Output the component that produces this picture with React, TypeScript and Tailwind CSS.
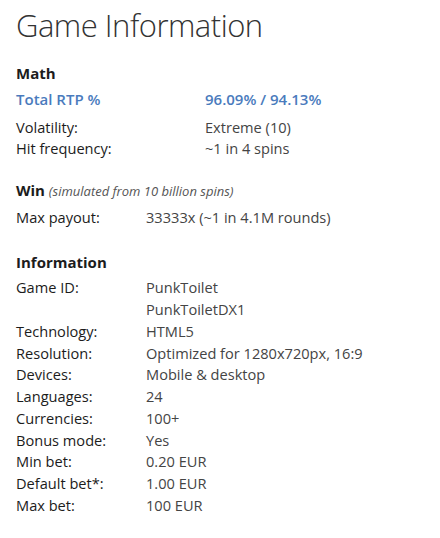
const mathRows = [
  { label: "Volatility:", value: "Extreme (10)" },
  { label: "Hit frequency:", value: "~1 in 4 spins" },
];

const infoRows: { label: string; value: string[] }[] = [
  { label: "Game ID:", value: ["PunkToilet", "PunkToiletDX1"] },
  { label: "Technology:", value: ["HTML5"] },
  { label: "Resolution:", value: ["Optimized for 1280x720px, 16:9"] },
  { label: "Devices:", value: ["Mobile & desktop"] },
  { label: "Languages:", value: ["24"] },
  { label: "Currencies:", value: ["100+"] },
  { label: "Bonus mode:", value: ["Yes"] },
  { label: "Min bet:", value: ["0.20 EUR"] },
  { label: "Default bet*:", value: ["1.00 EUR"] },
  { label: "Max bet:", value: ["100 EUR"] },
];

const App = () => {
  return (
    <div className="min-h-[538px] w-[440px] bg-white px-4 pt-[5px] font-['Open_Sans',sans-serif] text-[15px] leading-[21.75px] text-[#1c1c1c]">
      <h1 className="text-[31px] leading-[40px] font-light tracking-[-0.5px] text-[#333]">Game Information</h1>

      {/* Math */}
      <h2 className="mt-[18px] font-bold">Math</h2>
      <div className="mt-1 grid grid-cols-[189px_1fr] font-semibold text-[#4a7bbd]">
        <span>Total RTP %</span>
        <span>96.09% / 94.13%</span>
      </div>
      <div className="mt-[6px] grid grid-cols-[189px_1fr] text-[14.6px]">
        {mathRows.map((r) => (
          <div key={r.label} className="contents">
            <span>{r.label}</span>
            <span className="text-[#444]">{r.value}</span>
          </div>
        ))}
      </div>

      {/* Win */}
      <h2 className="mt-5">
        <span className="font-bold">Win</span>{" "}
        <span className="text-[13px] italic text-[#555]">(simulated from 10 billion spins)</span>
      </h2>
      <div className="mt-1 grid grid-cols-[130px_1fr] text-[14.6px]">
        <span>Max payout:</span>
        <span className="text-[#444]">33333x (~1 in 4.1M rounds)</span>
      </div>

      {/* Information */}
      <h2 className="mt-[23px] font-bold">Information</h2>
      <div className="mt-1 grid grid-cols-[130px_1fr] text-[14.6px]">
        {infoRows.map((r) => (
          <div key={r.label} className="contents">
            <span>{r.label}</span>
            <span className="flex flex-col text-[#444]">
              {r.value.map((v) => (
                <span key={v}>{v}</span>
              ))}
            </span>
          </div>
        ))}
      </div>
    </div>
  );
};

export default App;
